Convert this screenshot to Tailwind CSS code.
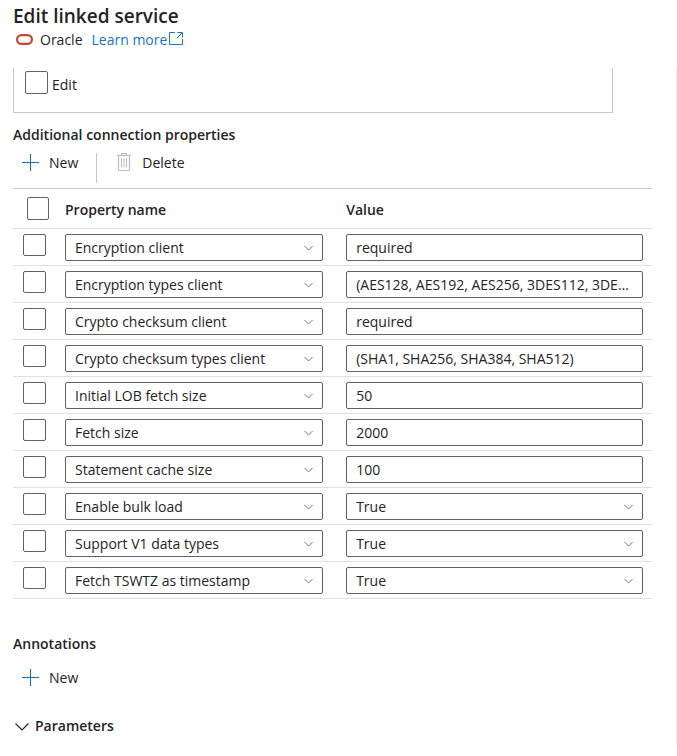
<!DOCTYPE html>
<html lang="en">
<head>
    <meta charset="UTF-8">
    <meta name="viewport" content="width=device-width, initial-scale=1.0">
    <title>Edit linked service</title>
    <script src="https://cdn.jsdelivr.net/npm/@tailwindcss/browser@4"></script>
</head>
<body class="bg-white text-[#242424] font-['Segoe_UI','Open_Sans',sans-serif] text-[14px] leading-5 min-h-screen flex flex-col pb-[10px]">

    <!-- Panel header -->
    <header class="pl-[13px] pt-1 h-17">
        <h1 class="text-[19px] leading-6 font-semibold">Edit linked service</h1>
        <div class="flex items-center pt-[2px]">
            <svg class="ml-[3px] mr-[7px]" width="17" height="12" viewBox="0 0 17 12" fill="none" stroke="#c74634" stroke-width="2.2" aria-hidden="true">
                <rect x="1.1" y="1.1" width="14.8" height="8.8" rx="4.4"/>
            </svg>
            <span>Oracle</span>
            <a href="#" class="ml-[9px] flex items-center gap-[2px] text-[#1a73c7]">Learn more
                <svg class="mb-[3px]" width="15" height="15" viewBox="0 0 15 15" fill="none" stroke="currentColor" aria-hidden="true">
                    <path d="M6 1.500H.5v12h13V8M8.500 1.500h5v5M13.500 1.500L8 7"/>
                </svg>
            </a>
        </div>
    </header>

    <main class="grow border-r border-[#f0f0f0] pl-[13px] pr-6">

        <!-- Tail of the connection settings -->
        <div class="mr-[39px] h-[45px] border border-t-0 border-[#c8c8c8] pl-[11px] pt-[3px]">
            <label class="flex items-start gap-1">
                <input type="checkbox" class="appearance-none size-[23px] rounded-[2px] border border-[#616161] bg-white checked:bg-[#0f6cbd]">
                <span class="pt-1">Edit</span>
            </label>
        </div>

        <section>
            <h2 class="font-semibold pt-3">Additional connection properties</h2>
            <div class="flex items-start h-[43px] pt-2">
                <button type="button" class="flex items-center gap-[10px] pl-2 pr-[18px]">
                    <svg class="mb-[2px]" width="18" height="18" viewBox="0 0 18 18" fill="none" stroke="#0f6cbd" aria-hidden="true">
                        <path d="M9.500 1v17M1 9.500h17"/>
                    </svg>
                    New
                </button>
                <span class="w-px h-[30px] bg-[#c8c8c8]"></span>
                <button type="button" class="flex items-center gap-[10px] pl-[19px]">
                    <svg class="mb-[2px]" width="16" height="18" viewBox="0 0 16 18" fill="none" stroke="#bdbdbd" aria-hidden="true">
                        <path d="M1 2.500h14M5.500 2.500V.6h5v1.900M2.500 3v13q0 1.500 1.500 1.500h8q1.500 0 1.500-1.500V3" stroke-width="1.2"/>
                        <path d="M5.500 5.500v9M8 5.500v9M10.500 5.500v9"/>
                    </svg>
                    Delete
                </button>
            </div>

            <table class="w-full table-fixed border-collapse">
                <thead>
                    <tr class="h-10 border-t border-b border-t-[#c8c8c8] border-b-[#e0e0e0]">
                        <th class="w-[52px] pl-[14px] text-left align-top pt-2">
                            <input type="checkbox" aria-label="Select all" class="block appearance-none w-[22px] h-[23px] rounded-[2px] border border-[#616161] bg-white checked:bg-[#0f6cbd]">
                        </th>
                        <th class="w-[44%] text-left font-semibold pt-[2px]">Property name</th>
                        <th class="text-left font-semibold pt-[2px]">Value</th>
                    </tr>
                </thead>
                <tbody id="property-rows"></tbody>
            </table>
        </section>

        <section class="pt-[35px]">
            <h2 class="font-semibold">Annotations</h2>
            <button type="button" class="flex items-center gap-[10px] pl-2 mt-[14px]">
                <svg class="mb-[2px]" width="18" height="18" viewBox="0 0 18 18" fill="none" stroke="#0f6cbd" aria-hidden="true">
                    <path d="M9.500 1v17M1 9.500h17"/>
                </svg>
                New
            </button>
        </section>

        <button type="button" aria-expanded="false" class="flex items-center gap-[6px] pl-[2px] mt-7 font-semibold">
            <svg width="14" height="14" viewBox="0 0 14 14" fill="none" stroke="#242424" stroke-width="1.1" aria-hidden="true">
                <path d="M.5 4.500L7 11l6.500-6.500"/>
            </svg>
            Parameters
        </button>
    </main>

    <script>
        const properties = [
            { name: 'Encryption client', value: 'required' },
            { name: 'Encryption types client', value: '(AES128, AES192, AES256, 3DES112, 3DES168)' },
            { name: 'Crypto checksum client', value: 'required' },
            { name: 'Crypto checksum types client', value: '(SHA1, SHA256, SHA384, SHA512)' },
            { name: 'Initial LOB fetch size', value: '50' },
            { name: 'Fetch size', value: '2000' },
            { name: 'Statement cache size', value: '100' },
            { name: 'Enable bulk load', value: 'True', bool: true },
            { name: 'Support V1 data types', value: 'True', bool: true },
            { name: 'Fetch TSWTZ as timestamp', value: 'True', bool: true },
        ];

        const fieldClass = 'block appearance-none w-full h-[27px] rounded-[2px] border border-[#616161] bg-white px-[9px] text-ellipsis';

        function dropdown(label, options, selected) {
            return `
                <div class="relative">
                    <select aria-label="${label}" class="${fieldClass}">
                        ${options.map(o => `<option${o === selected ? ' selected' : ''}>${o}</option>`).join('')}
                    </select>
                    <svg class="absolute right-[10px] top-[10px] pointer-events-none" width="9" height="8" viewBox="0 0 9 8" fill="none" stroke="#757575">
                        <path d="M.5 2l4 4 4-4"/>
                    </svg>
                </div>`;
        }

        const names = properties.map(p => p.name);
        document.getElementById('property-rows').innerHTML = properties.map(p => `
            <tr class="h-[37px] border-b border-[#e0e0e0]">
                <td class="pl-[10px] pt-[5px] align-top">
                    <input type="checkbox" aria-label="Select ${p.name}" class="block appearance-none w-[23px] h-[22px] rounded-[2px] border border-[#616161] bg-white checked:bg-[#0f6cbd]">
                </td>
                <td class="pr-[23px] pt-[5px] align-top">${dropdown('Property name', names, p.name)}</td>
                <td class="pr-[9px] pt-[5px] align-top">${p.bool
                    ? dropdown(p.name, ['True', 'False'], p.value)
                    : `<input type="text" aria-label="${p.name}" value="${p.value}" class="${fieldClass}">`}</td>
            </tr>`).join('');
    </script>
</body>
</html>
